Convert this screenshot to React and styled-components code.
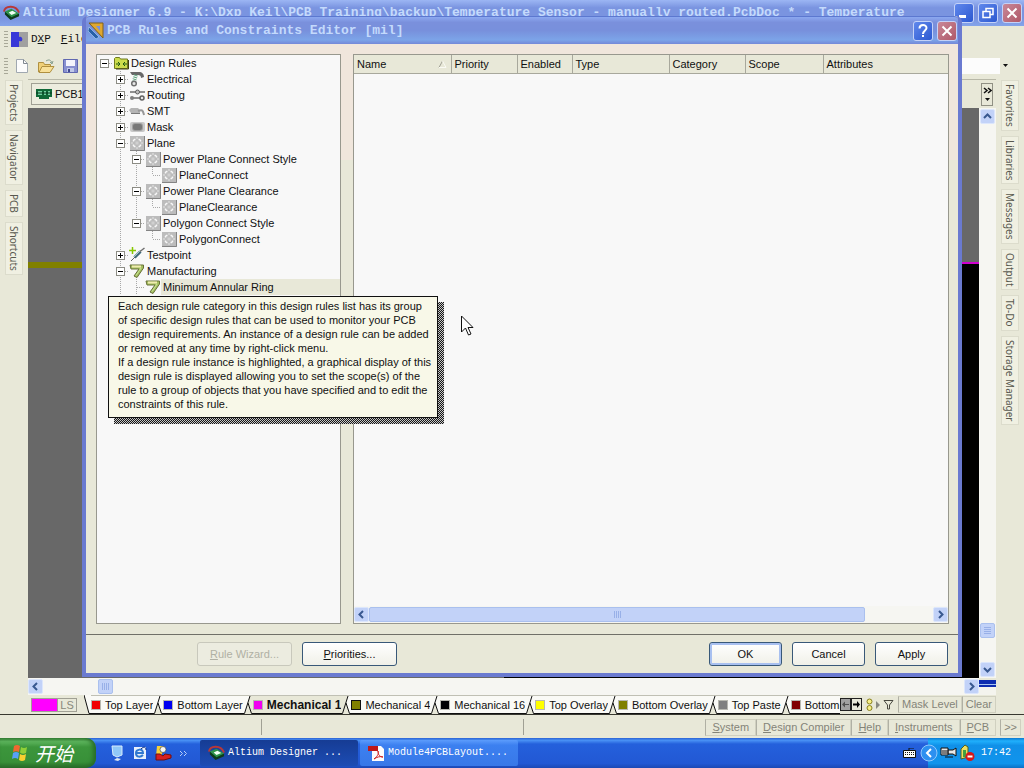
import React from "react";
import styled, { createGlobalStyle, css } from "styled-components";

const GlobalStyle = createGlobalStyle`
  * {
    box-sizing: border-box;
  }
  body {
    margin: 0;
    background-color: #e8e8d8;
    color: #101010;
    font: 11px/16px "Liberation Sans", Arial, sans-serif;
    overflow: hidden;
  }
  button, input, select {
    font: inherit;
    color: inherit;
    margin: 0;
    padding: 0;
    border: 0;
    background: none;
  }
  ul {
    list-style: none;
    margin: 0;
    padding: 0;
  }
  svg {
    display: block;
    flex: none;
  }
`;

const mono = css`
  font-family: "Liberation Mono", "Courier New", monospace;
`;

const Desktop = styled.div`
  position: relative;
  display: flex;
  flex-direction: column;
  height: 100vh;
  overflow: hidden;
`;

/* main window */

const TitleBar = styled.header`
  display: flex;
  align-items: center;
  height: 26px;
  padding: 0 2px 0 3px;
  flex: none;
  background: linear-gradient(#9cb6f4, #7a94e0 30%, #7a94e0 70%, #84a4ea);
`;

const TitleText = styled.h1`
  ${mono}
  flex: 1;
  min-width: 0;
  margin: 0 0 0 3px;
  overflow: hidden;
  white-space: pre;
  color: #c4dafc;
  font-size: 13px;
  line-height: 20px;
  font-weight: bold;
`;

const WindowButton = styled.button`
  display: flex;
  align-items: center;
  justify-content: center;
  flex: none;
  width: 20px;
  height: 20px;
  margin-left: 4px;
  border: 1px solid #c4d2f8;
  border-radius: 3px;
  background: ${({ $close }) =>
    $close
      ? "linear-gradient(135deg, #c88898, #b05868)"
      : "linear-gradient(135deg, #6088ec, #2c58d0)"};
`;

const MenuBar = styled.nav`
  display: flex;
  align-items: center;
  flex: none;
  height: 26px;
  padding-left: 4px;
`;

const MenuItem = styled.button`
  ${mono}
  font-size: 11px;
  line-height: 16px;
  margin-right: ${({ $icon }) => ($icon ? "3px" : "10px")};
`;

const Grip = styled.span`
  width: 4px;
  height: 16px;
  margin-right: 3px;
  background: repeating-linear-gradient(#a8a898 0 1px, transparent 1px 3px);
`;

const ToolBar = styled.div`
  display: flex;
  align-items: center;
  flex: none;
  height: 27px;
  padding: 0 16px 0 4px;
`;

const ToolButton = styled.button`
  display: flex;
  justify-content: center;
  width: 22px;
  height: 16px;
  margin-right: 2px;
`;

const Combo = styled.div`
  display: flex;
  align-items: center;
  width: 200px;
  margin-left: auto;

  select {
    flex: 1;
    height: 16px;
    background-color: #fcfcfc;
    appearance: none;
  }
`;

const Workspace = styled.main`
  display: flex;
  flex: 1;
  min-height: 0;
`;

const SideStrip = styled.nav`
  display: flex;
  flex-direction: column;
  align-items: center;
  gap: 5px;
  flex: none;
  width: 28px;
  padding-top: 1px;
`;

const SideTab = styled.button`
  padding: 3px 0;
  width: 18px;
  border: 1px solid #dcdccc;
  background-color: #f0f0e2;
  color: #58584e;
  font-family: "Noto Sans", sans-serif;
  font-size: 10px;
  line-height: 16px;
  writing-mode: vertical-rl;
`;

const Editor = styled.section`
  display: flex;
  flex-direction: column;
  flex: 1;
  min-width: 0;
`;

const DocBar = styled.div`
  display: flex;
  align-items: center;
  flex: none;
  height: 29px;
  padding: 0 3px;
  border-top: 1px solid #b8b8a8;
`;

const DocTab = styled.button`
  display: flex;
  align-items: center;
  gap: 3px;
  width: 120px;
  height: 22px;
  padding-left: 4px;
  border: 1px solid #a0a094;
  background-color: #ececde;
`;

const DocMore = styled.button`
  display: flex;
  justify-content: center;
  align-items: center;
  width: 12px;
  height: 23px;
  margin-left: auto;
  border: 1px solid #909084;
`;

const CanvasRow = styled.div`
  display: flex;
  flex: 1;
  min-height: 0;
`;

const BoardHalf = styled.div`
  display: flex;
  flex-direction: column;
  flex: 1;
  background-color: ${({ $dark }) => ($dark ? "#000000" : "#686868")};
`;

const BoardGap = styled.div`
  height: 154px;
  background-color: #686868;
`;

const BoardLine = styled.div`
  height: ${({ $thin }) => ($thin ? "2px" : "6px")};
  background-color: ${({ $color }) => $color};
`;

const VScroll = styled.div`
  display: flex;
  flex-direction: column;
  align-items: center;
  width: 17px;
  padding: 1px 0;
  background-color: #f6f6f2;
`;

const HScroll = styled.div`
  display: flex;
  align-items: center;
  flex: none;
  height: 17px;
  background-color: #f6f6f2;
`;

const ScrollButton = styled.button`
  display: flex;
  align-items: center;
  justify-content: center;
  flex: none;
  width: 15px;
  height: 15px;
  border: 1px solid #dce6fc;
  border-radius: 2px;
  background-color: #c2d2f8;
`;

const ScrollThumb = styled.div`
  display: flex;
  align-items: center;
  justify-content: center;
  height: 15px;
  width: 15px;
  border: 1px solid #aac0ee;
  border-radius: 2px;
  background-color: #c2d2f8;
`;

const Spacer = styled.div`
  flex: ${({ $size }) => ($size ? `0 0 ${$size}px` : 1)};
`;

const Corner = styled.div`
  align-self: stretch;
  width: 17px;
  background: linear-gradient(
    #e8e8d8 0 2px,
    #0c2cb0 2px 6px,
    #a8c4f0 6px 7px,
    #0c2cb0 7px 9px,
    #f4f4ee 9px
  );
`;

/* layer tabs */

const LayerBar = styled.div`
  display: flex;
  align-items: center;
  flex: none;
  height: 20px;
  padding: 0 28px 0 31px;
  border-bottom: 1px solid #383830;
`;

const LayerSet = styled.button`
  display: flex;
  width: 46px;
  height: 14px;
  margin-right: 7px;
  border: 1px solid #a0a094;
  color: #88887c;
  line-height: 13px;

  &::before {
    content: "";
    width: 25px;
    align-self: stretch;
    background-color: #ff00ff;
  }
  span {
    flex: 1;
    border-left: 1px solid #a0a094;
  }
`;

const LayerTabs = styled.div`
  display: flex;
  align-self: stretch;
  flex: 1;
  min-width: 0;
  overflow: hidden;
`;

const LayerTab = styled.button`
  display: flex;
  align-items: center;
  gap: 4px;
  flex: none;
  height: 19px;
  border-top: 1px solid #c0c0b4;
  border-bottom: 1px solid #101010;
  background-color: ${({ $active }) => ($active ? "#e8e8d8" : "#fafaf6")};
  font-weight: ${({ $active }) => ($active ? "bold" : "normal")};
  font-size: ${({ $active }) => ($active ? "12px" : "11px")};
  white-space: nowrap;
`;

const Swatch = styled.span`
  width: 10px;
  height: 10px;
  background-color: ${({ $color }) => $color};
  border: 1px solid ${({ $edge }) => $edge || "#b8b8b0"};
`;

const TabArrow = styled.button`
  display: flex;
  align-items: center;
  justify-content: center;
  width: 11px;
  height: 13px;
  border: 1px solid #202020;
  background-color: ${({ $off }) => ($off ? "#a0a0a0" : "#e8e8d8")};
`;

const MaskTools = styled.div`
  display: flex;
  align-items: center;
  gap: 3px;
  padding: 0 4px;
`;

const FlatButton = styled.button`
  height: 17px;
  padding: 0 ${({ $tight }) => ($tight ? "3px" : "6px")};
  border: 1px solid #d0d0c0;
  border-left-color: #b0b0a4;
  color: #848478;
  line-height: 15px;
  white-space: nowrap;
`;

const StatusBar = styled.footer`
  display: flex;
  align-items: center;
  flex: none;
  height: 23px;
  padding: 1px 3px 0 0;
`;

const StatusField = styled.span`
  width: 262px;
  height: 16px;
  border-right: 1px solid #a0a094;
`;

const StatusButtons = styled.div`
  display: flex;
  margin-left: auto;

  button:last-child {
    margin-left: 4px;
  }
`;

/* taskbar */

const TaskBar = styled.footer`
  ${mono}
  display: flex;
  align-items: center;
  flex: none;
  height: 30px;
  color: #ffffff;
  font-size: 10px;
  background: linear-gradient(#2c62d4, #4890f4 8%, #2460dc 20%, #2258d4 85%, #1c48b4);
`;

const StartButton = styled.button`
  display: flex;
  align-items: center;
  gap: 5px;
  width: 96px;
  height: 30px;
  padding-left: 11px;
  border-radius: 0 10px 10px 0;
  background: linear-gradient(#3c8a3c, #5cb45c 12%, #3c963c 30%, #389038 80%, #286c28);
  box-shadow: inset -3px 0 4px #286c28;
  font-family: "Noto Sans CJK SC", sans-serif;
  font-size: 19px;
  font-style: italic;
  line-height: 28px;
`;

const QuickLaunch = styled.div`
  display: flex;
  align-items: center;
  gap: 7px;
  width: 104px;
  padding-left: 13px;
`;

const Task = styled.button`
  display: flex;
  align-items: center;
  gap: 3px;
  width: 158px;
  height: 26px;
  margin-right: 2px;
  padding-left: 8px;
  border-radius: 2px;
  white-space: pre;
  background: ${({ $pressed }) =>
    $pressed
      ? "linear-gradient(#163c94, #1c4cb4)"
      : "linear-gradient(#5c9cfc, #3c80f0 20%, #3878e8)"};
`;

const Tray = styled.div`
  display: flex;
  align-items: center;
  align-self: stretch;
  gap: 2px;
  margin-left: 11px;
  width: 96px;
  background: linear-gradient(#0c78d0, #20b0fc 10%, #1090e8 25%, #1094ec 85%, #0c70c4);

  > svg:first-child {
    margin-left: -8px;
  }
  time {
    margin-left: 4px;
  }
`;

/* rules dialog */

const Dialog = styled.section`
  position: absolute;
  top: 16px;
  left: 82px;
  right: 62px;
  bottom: 91px;
  display: flex;
  flex-direction: column;
  border: 4px solid #6a7ad0;
  border-top-width: 0;
  border-radius: 6px 6px 0 0;
  background: linear-gradient(#f0e6dc 0 144px, #e8e8d8 144px);
`;

const DialogTitle = styled.header`
  display: flex;
  align-items: center;
  flex: none;
  height: 28px;
  padding: 0 1px 0 2px;
  border-top: 1px solid #5c78d0;
  border-radius: 4px 4px 0 0;
  background: linear-gradient(#8ca8f0, #7a90dc 20%, #7890dc 50%, #7ca4e8 85%, #7488d8);
`;

const DialogBody = styled.div`
  display: flex;
  flex: 1;
  min-height: 0;
  gap: 12px;
  padding: 10px 9px 10px 10px;
  border-bottom: 1px solid #707068;
`;

const TreePanel = styled.ul`
  width: 245px;
  flex: none;
  border: 1px solid #98988e;
  background-color: #f8f8f8;
  overflow: hidden;
`;

const TreeRow = styled.li`
  display: flex;
  height: 16px;
`;

const dottedV = "repeating-linear-gradient(#a8a8a8 0 1px, transparent 1px 2px)";
const dottedH =
  "repeating-linear-gradient(90deg, #a8a8a8 0 1px, transparent 1px 2px)";

const TreeCell = styled.span`
  display: flex;
  align-items: center;
  justify-content: center;
  flex: none;
  width: 16px;
  height: 16px;
  background:
    ${({ $line }) => ($line ? dottedV : "none")} 7px 0 / 1px
      ${({ $line }) => ($line === "half" ? "8px" : "16px")} no-repeat,
    ${({ $branch }) => ($branch ? dottedH : "none")} 8px 8px / 8px 1px no-repeat;
`;

const Expander = styled.button`
  display: flex;
  align-items: center;
  justify-content: center;
  width: 9px;
  height: 9px;
  margin-right: 1px;
  border: 1px solid #8c8c84;
  background-color: #ffffff;
`;

const TreeLabel = styled.span`
  flex: 1;
  padding-left: 2px;
  white-space: nowrap;
  background-color: ${({ $selected }) => ($selected ? "#e8e8d8" : "transparent")};
`;

const RulesPanel = styled.div`
  display: flex;
  flex-direction: column;
  flex: 1;
  min-width: 0;
  border: 1px solid #98988e;
  background-color: #f8f8f8;
`;

const RulesTable = styled.table`
  width: 100%;
  table-layout: fixed;
  border-collapse: collapse;

  th {
    height: 18px;
    padding: 0 4px 0 3px;
    border-right: 1px solid #a8a89c;
    border-bottom: 1px solid #a8a89c;
    background-color: #e8e8d8;
    font-weight: normal;
    line-height: 16px;
    text-align: left;
  }
  th:last-child {
    border-right: 0;
  }
  th > div {
    display: flex;
    align-items: center;
    justify-content: space-between;
  }
`;

const ScrollTrack = styled.div`
  display: grid;
  grid-template-columns: 88% 1fr;
  flex: 1;

  > div {
    width: auto;
  }
`;

const DialogFooter = styled.footer`
  display: flex;
  align-items: center;
  gap: 10px;
  flex: none;
  height: 38px;
  padding: 0 10px 0 111px;
`;

const PushButton = styled.button`
  width: ${({ $wide }) => ($wide ? "95px" : "73px")};
  height: 24px;
  border: 1px solid ${({ disabled }) => (disabled ? "#c8c8bc" : "#385878")};
  border-radius: 3px;
  background: ${({ disabled }) =>
    disabled ? "#ecece0" : "linear-gradient(#ffffff, #f0f0e8)"};
  color: ${({ disabled }) => (disabled ? "#b0b0a4" : "#101010")};
  box-shadow: ${({ $primary }) =>
    $primary ? "inset 0 0 0 2px #a8c0f0" : "none"};
`;

const HelpTip = styled.div`
  position: absolute;
  top: 280px;
  left: 22px;
  width: 330px;
  padding: 2px 0 6px 9px;
  border: 1px solid #101010;
  background-color: #f8f8e8;
  line-height: 14px;
  white-space: pre;

  &::before,
  &::after {
    content: "";
    position: absolute;
    background: repeating-conic-gradient(#181818 0 25%, #c8c8c8 0 50%) 0 0 / 2px
      2px;
  }
  &::before {
    top: 5px;
    right: -7px;
    bottom: -7px;
    width: 6px;
  }
  &::after {
    left: 5px;
    right: -1px;
    bottom: -7px;
    height: 6px;
  }
`;

const Pointer = styled.svg`
  position: absolute;
  top: 299px;
  left: 375px;
`;

/* icons */

const Chip = ({ size = 18 }) => (
  <svg width={size} height={size} viewBox="0 0 18 18">
    <path d="M1 7C2 1 13-1 17 8" fill="none" stroke="#b83838" strokeWidth="2" />
    <path d="M2 10l6 6 9-4V9l-8 3-7-5z" fill="#0c3c1c" />
    <path d="M2 7l7-3 8 5-8 4z" fill="#2c9448" />
    <path d="M6 8l4-2 4 2.500-5 2z" fill="#f0fff4" />
  </svg>
);

const Arrow = ({ turn = 0, color = "#385890" }) => (
  <svg width="9" height="9" viewBox="0 0 9 9">
    <path
      d="M3 1l3.5 3.5L3 8"
      fill="none"
      stroke={color}
      strokeWidth="2"
      transform={`rotate(${turn} 4.5 4.5)`}
    />
  </svg>
);

const ThumbLines = ({ turn = 0 }) => (
  <svg width="9" height="9" viewBox="0 0 9 9">
    <path
      d="M1.5 1v7M3.5 1v7M5.5 1v7M7.5 1v7"
      stroke="#98b0e8"
      transform={`rotate(${turn} 4.5 4.5)`}
    />
  </svg>
);

const Cross = () => (
  <svg width="12" height="12" viewBox="0 0 12 12">
    <path d="M1.5 1.5l9 9M10.5 1.5l-9 9" stroke="#fff" strokeWidth="2" />
  </svg>
);

const Caret = () => (
  <svg width="5" height="3" viewBox="0 0 5 3">
    <path d="M0 0h5L2.5 3z" fill="#101010" />
  </svg>
);

const PlaneIcon = () => (
  <svg width="15" height="15" viewBox="0 0 15 15">
    <path d="M0 0h15v15H0z" fill="#bcbcbc" />
    <path d="M0 14.5h14.5V0" fill="none" stroke="#848484" />
    <path
      d="M5.500 3.500H4.500L3.500 4.500v1M8.500 3.500h1l1 1v1M10.500 8.500v1l-1 1h-1M5.500 10.500h-1l-1-1v-1"
      fill="none"
      stroke="#f8f8f8"
      strokeWidth="1.500"
    />
    <path d="M1 7h2M11 7h2M7 1v2M7 11v2" stroke="#e4e4e4" />
    <path d="M5.500 5.500h3v3h-3z" fill="#d0d0d0" />
  </svg>
);

const ManufacturingIcon = () => (
  <svg width="16" height="16" viewBox="0 0 16 16">
    <path d="M1 2h13.500v3L8 14.500 5 13l5-7H2z" fill="#a4c060" stroke="#687038" strokeLinejoin="round" />
    <path d="M3 3.500h9" stroke="#f0ecb0" strokeWidth="2" />
    <path d="M12 5L7 12.500" stroke="#c8e498" />
  </svg>
);

const treeIcons = {
  root: (
    <svg width="16" height="16" viewBox="0 0 16 16">
      <path d="M1.500 13.500v-10l1-1h4l1 1.500h7v9.500z" fill="#ccdc4c" stroke="#707820" />
      <path d="M15.500 5v9H3" fill="none" stroke="#404010" />
      <path d="M3 9h4M5 7l2 2-2 2M14 9h-4M12 7l-2 2 2 2" fill="none" stroke="#205810" />
    </svg>
  ),
  electrical: (
    <svg width="16" height="16" viewBox="0 0 16 16">
      <path d="M1 1h9c3 0 5 2 5 5l-3 1c0-2-1-3-3-3H3z" fill="#686868" />
      <path d="M7 4L5 10" stroke="#58a078" strokeWidth="4" strokeDasharray="1 1" />
      <circle cx="5" cy="12.500" r="2.300" fill="#e8e8e8" stroke="#707070" strokeWidth="1.500" />
    </svg>
  ),
  routing: (
    <svg width="16" height="16" viewBox="0 0 16 16">
      <path d="M1 5h6M10 5h6M2 11h9" fill="none" stroke="#909090" strokeWidth="2" />
      <circle cx="8.500" cy="5" r="2" fill="#c0c0c0" stroke="#606060" />
      <circle cx="3" cy="11" r="2" fill="#808080" />
      <circle cx="13" cy="11" r="2" fill="#e8e8e8" stroke="#606060" strokeWidth="1.500" />
    </svg>
  ),
  smt: (
    <svg width="16" height="16" viewBox="0 0 16 16">
      <path d="M0 7l2-2h7l2 2v3H2z" fill="#b4b4b4" />
      <path d="M2 10.500h9" stroke="#787878" />
      <path d="M9 8c5-2 5 0 6 4" fill="none" stroke="#989898" strokeWidth="2" />
    </svg>
  ),
  mask: (
    <svg width="16" height="16" viewBox="0 0 16 16">
      <rect x="1" y="3" width="15" height="10" rx="2" fill="#c8c8c8" />
      <rect x="3" y="4" width="11" height="8" rx="3" fill="#a0a0a0" />
      <rect x="4" y="5" width="9" height="6" rx="2" fill="#787878" />
    </svg>
  ),
  plane: <PlaneIcon />,
  testpoint: (
    <svg width="16" height="16" viewBox="0 0 16 16">
      <path d="M3.500 0v7M0 3.500h7" stroke="#88c800" strokeWidth="1.500" />
      <path d="M2 14l4-4" stroke="#606060" />
      <path d="M5.500 10.500l6-6" stroke="#406878" strokeWidth="3" />
      <path d="M5 10l7-7" stroke="#a0c8c8" />
      <path d="M11 4.500L15.500 1" stroke="#707070" strokeWidth="1.500" />
    </svg>
  ),
  manufacturing: <ManufacturingIcon />,
};

/* data */

const tree = [
  { label: "Design Rules", icon: "root", level: 0, box: "-" },
  { label: "Electrical", icon: "electrical", level: 1, box: "+" },
  { label: "Routing", icon: "routing", level: 1, box: "+" },
  { label: "SMT", icon: "smt", level: 1, box: "+" },
  { label: "Mask", icon: "mask", level: 1, box: "+" },
  { label: "Plane", icon: "plane", level: 1, box: "-" },
  { label: "Power Plane Connect Style", icon: "plane", level: 2, box: "-" },
  { label: "PlaneConnect", icon: "plane", level: 3, last: true },
  { label: "Power Plane Clearance", icon: "plane", level: 2, box: "-" },
  { label: "PlaneClearance", icon: "plane", level: 3, last: true },
  { label: "Polygon Connect Style", icon: "plane", level: 2, box: "-", last: true },
  { label: "PolygonConnect", icon: "plane", level: 3, last: true, parentLast: true },
  { label: "Testpoint", icon: "testpoint", level: 1, box: "+" },
  { label: "Manufacturing", icon: "manufacturing", level: 1, box: "-" },
  { label: "Minimum Annular Ring", icon: "manufacturing", level: 2, selected: true },
];

const columns = [
  { label: "Name", width: 97 },
  { label: "Priority", width: 66 },
  { label: "Enabled", width: 55 },
  { label: "Type", width: 97 },
  { label: "Category", width: 76 },
  { label: "Scope", width: 78 },
  { label: "Attributes" },
];

const layers = [
  { label: "Top Layer", color: "#f00000" },
  { label: "Bottom Layer", color: "#0000f0" },
  { label: "Mechanical 1", color: "#f000f0", active: true },
  { label: "Mechanical 4", color: "#808000", edge: "#101010" },
  { label: "Mechanical 16", color: "#000000" },
  { label: "Top Overlay", color: "#ffff00" },
  { label: "Bottom Overlay", color: "#808000" },
  { label: "Top Paste", color: "#808080" },
  { label: "Bottom", color: "#800000" },
];

const leftTabs = ["Projects", "Navigator", "PCB", "Shortcuts"];
const rightTabs = [
  "Favorites",
  "Libraries",
  "Messages",
  "Output",
  "To-Do",
  "Storage Manager",
];
const panels = ["System", "Design Compiler", "Help", "Instruments", "PCB"];

const tip = `Each design rule category in this design rules list has its group
of specific design rules that can be used to monitor your PCB
design requirements. An instance of a design rule can be added
or removed at any time by right-click menu.
If a design rule instance is highlighted, a graphical display of this
design rule is displayed allowing you to set the scope(s) of the
rule to a group of objects that you have specified and to edit the
constraints of this rule.`;

const TabEdge = ({ left, right }) => (
  <svg width="10" height="19" viewBox="0 0 10 19">
    <path d="M0 0h10v19H0z" fill="#e8e8d8" />
    <path d="M6 0h4v19H8.500L5 8z" fill={right} />
    <path d="M0 0h7L1.500 18.500H0z" fill={left} />
    <path d="M0 .5h10" stroke="#c0c0b4" />
    <path d="M0 18.500h1.500L7 1M5 8l3.500 10.500H10" fill="none" stroke="#101010" />
  </svg>
);

const tabFill = (layer) => (layer.active ? "#e8e8d8" : "#fafaf6");

const TreeItem = ({ node }) => {
  const guides = [];
  for (let i = 0; i < node.level; i += 1) {
    guides.push(
      <TreeCell key={i} $line={i > 0 && !(node.parentLast && i === 2)} />
    );
  }
  return (
    <TreeRow>
      {guides}
      <TreeCell
        $branch
        $line={node.level === 0 ? null : node.last ? "half" : "full"}
      >
        {node.box && (
          <Expander aria-label={`Toggle ${node.label}`}>
            <svg width="7" height="7" viewBox="0 0 7 7">
              <path
                d={node.box === "+" ? "M1 3.5h5M3.500 1v5" : "M1 3.5h5"}
                stroke="#000"
              />
            </svg>
          </Expander>
        )}
      </TreeCell>
      <TreeCell>{treeIcons[node.icon]}</TreeCell>
      <TreeLabel $selected={node.selected}>{node.label}</TreeLabel>
    </TreeRow>
  );
};

const RulesDialog = () => (
  <Dialog role="dialog" aria-label="PCB Rules and Constraints Editor">
    <DialogTitle>
      <svg width="16" height="18" viewBox="0 0 16 18">
        <path d="M1 1h14v15z" fill="#e0a830" stroke="#806018" />
        <path d="M8 4h4v5z" fill="#7890dc" />
        <path d="M1 5l10 10-3 2L0 9z" fill="#2860a8" stroke="#b0d8f8" strokeWidth=".6" />
      </svg>
      <TitleText as="h2">PCB Rules and Constraints Editor [mil]</TitleText>
      <WindowButton aria-label="Help">
        <svg width="12" height="14" viewBox="0 0 12 14">
          <path d="M2.500 4.500C2.500 0 9.500 0 9.500 4c0 2.500-3.500 2.500-3.500 6" fill="none" stroke="#fff" strokeWidth="2" />
          <path d="M5 11h2v2H5z" fill="#fff" />
        </svg>
      </WindowButton>
      <WindowButton $close aria-label="Close">
        <Cross />
      </WindowButton>
    </DialogTitle>
    <DialogBody>
      <TreePanel>
        {tree.map((node) => (
          <TreeItem key={node.label} node={node} />
        ))}
      </TreePanel>
      <RulesPanel>
        <RulesTable>
          <colgroup>
            {columns.map((column) => (
              <col key={column.label} width={column.width} />
            ))}
          </colgroup>
          <thead>
            <tr>
              {columns.map((column, index) => (
                <th key={column.label}>
                  <div>
                    {column.label}
                    {index === 0 && (
                      <svg width="9" height="8" viewBox="0 0 9 8">
                        <path d="M1 7.500L4.500 1" stroke="#a0a094" />
                        <path d="M4.500 1L8 7.500H1" fill="none" stroke="#fafaf4" />
                      </svg>
                    )}
                  </div>
                </th>
              ))}
            </tr>
          </thead>
        </RulesTable>
        <Spacer />
        <HScroll>
          <ScrollButton aria-label="Scroll left">
            <Arrow turn={180} />
          </ScrollButton>
          <ScrollTrack>
            <ScrollThumb>
              <ThumbLines />
            </ScrollThumb>
          </ScrollTrack>
          <ScrollButton aria-label="Scroll right">
            <Arrow />
          </ScrollButton>
        </HScroll>
      </RulesPanel>
    </DialogBody>
    <DialogFooter>
      <PushButton $wide disabled>
        <u>R</u>ule Wizard...
      </PushButton>
      <PushButton $wide>
        <u>P</u>riorities...
      </PushButton>
      <Spacer />
      <PushButton $primary>OK</PushButton>
      <PushButton>Cancel</PushButton>
      <PushButton>Apply</PushButton>
    </DialogFooter>
    <HelpTip role="tooltip">{tip}</HelpTip>
    <Pointer width="13" height="21" viewBox="0 0 13 21">
      <path d="M.5 1v16l4-4 3 7 2.500-1-3-6.500h5z" fill="#fff" stroke="#101010" />
    </Pointer>
  </Dialog>
);

const App = () => (
  <>
    <GlobalStyle />
    <Desktop>
      <TitleBar>
        <Chip size={17} />
        <TitleText>
          {
            "Altium Designer 6.9 - K:\\Dxp_Keil\\PCB Training\\backup\\Temperature Sensor - manually routed.PcbDoc * - Temperature"
          }
        </TitleText>
        <WindowButton aria-label="Minimize">
          <svg width="12" height="12" viewBox="0 0 12 12">
            <path d="M1 9.500h7" stroke="#fff" strokeWidth="3" />
          </svg>
        </WindowButton>
        <WindowButton aria-label="Restore">
          <svg width="12" height="12" viewBox="0 0 12 12">
            <path d="M4 4V1.500h7v6H8.500M1 4.500h7v6H1z" fill="none" stroke="#fff" strokeWidth="1.500" />
          </svg>
        </WindowButton>
        <WindowButton $close aria-label="Close">
          <Cross />
        </WindowButton>
      </TitleBar>
      <MenuBar>
        <Grip />
        <MenuItem $icon aria-label="System menu">
          <svg width="17" height="15" viewBox="0 0 17 15">
            <path d="M8 0h9v15H8z" fill="#a0a0a0" />
            <path d="M0 0h8v5c4-2 5 6 0 4v6H0z" fill="#3838d8" />
          </svg>
        </MenuItem>
        <MenuItem>
          D<u>X</u>P
        </MenuItem>
        <MenuItem>
          <u>F</u>ile
        </MenuItem>
      </MenuBar>
      <ToolBar>
        <Grip />
        <ToolButton aria-label="New">
          <svg width="12" height="16" viewBox="0 0 12 16">
            <path d="M.5 1.500h7l4 4v9H.5z" fill="#fcfcfc" stroke="#a0a8b0" />
            <path d="M7.500 1.500v4h4" fill="none" stroke="#808890" />
          </svg>
        </ToolButton>
        <ToolButton aria-label="Open">
          <svg width="17" height="16" viewBox="0 0 17 16">
            <path d="M.5 14V4.500h5l1 2h6V9" fill="#f0d078" stroke="#b09040" />
            <path d="M1 14.500l3-6h12l-4 6z" fill="#f8e098" stroke="#b09040" />
            <path d="M8 3c3-2 5-1 6 2M12 4l2 2 1-3" fill="none" stroke="#88a090" />
          </svg>
        </ToolButton>
        <ToolButton aria-label="Save">
          <svg width="15" height="16" viewBox="0 0 15 16">
            <path d="M.5 1.500h14v13H.5z" fill="#8890d0" stroke="#6068b0" />
            <path d="M3 2h9v6H3z" fill="#f4f4fc" />
            <path d="M4 10h7v4H4z" fill="#c0c8e8" />
            <path d="M5 11h2v3H5z" fill="#404890" />
          </svg>
        </ToolButton>
        <Combo>
          <select aria-label="Filter" />
          <Spacer $size={3} />
          <Caret />
        </Combo>
      </ToolBar>
      <Workspace>
        <SideStrip>
          {leftTabs.map((tab) => (
            <SideTab key={tab}>{tab}</SideTab>
          ))}
        </SideStrip>
        <Editor>
          <DocBar>
            <DocTab>
              <svg width="16" height="12" viewBox="0 0 16 12">
                <path d="M0 1h16v8h-3v2H3V9H0z" fill="#106838" />
                <path d="M2 3h4v4H2zM8 3h2v4H8zM12 3h2v4h-2z" fill="#70d0a0" />
                <path d="M0 5h16" stroke="#083820" />
              </svg>
              PCB1
            </DocTab>
            <DocMore aria-label="More documents">
              <svg width="9" height="15" viewBox="0 0 9 15">
                <path d="M1 1l3 2.500L1 6M5 1l3 2.500L5 6" fill="none" stroke="#101010" strokeWidth="1.500" />
                <path d="M2 11h5l-2.500 3z" fill="#101010" />
              </svg>
            </DocMore>
          </DocBar>
          <CanvasRow>
            <BoardHalf>
              <BoardGap />
              <BoardLine $color="#808000" />
            </BoardHalf>
            <BoardHalf $dark>
              <BoardGap />
              <BoardLine $thin $color="#d000d0" />
            </BoardHalf>
            <VScroll>
              <ScrollButton aria-label="Scroll up">
                <Arrow turn={-90} />
              </ScrollButton>
              <Spacer />
              <ScrollThumb>
                <ThumbLines turn={90} />
              </ScrollThumb>
              <Spacer $size={24} />
              <ScrollButton aria-label="Scroll down">
                <Arrow turn={90} />
              </ScrollButton>
            </VScroll>
          </CanvasRow>
          <HScroll>
            <ScrollButton aria-label="Scroll left">
              <Arrow turn={180} />
            </ScrollButton>
            <Spacer $size={55} />
            <ScrollThumb>
              <ThumbLines />
            </ScrollThumb>
            <Spacer />
            <ScrollButton aria-label="Scroll right">
              <Arrow />
            </ScrollButton>
            <Corner />
          </HScroll>
        </Editor>
        <SideStrip>
          {rightTabs.map((tab) => (
            <SideTab key={tab}>{tab}</SideTab>
          ))}
        </SideStrip>
      </Workspace>
      <LayerBar>
        <LayerSet>
          <span>LS</span>
        </LayerSet>
        <svg width="7" height="19" viewBox="0 0 7 19">
          <path d="M0 0h7v19H5z" fill="#fafaf6" />
          <path d="M0 0l5 18.500h2" fill="none" stroke="#101010" />
        </svg>
        <LayerTabs>
          {layers.map((layer, index) => (
            <React.Fragment key={layer.label}>
              {index > 0 && (
                <TabEdge left={tabFill(layers[index - 1])} right={tabFill(layer)} />
              )}
              <LayerTab $active={layer.active}>
                <Swatch $color={layer.color} $edge={layer.edge} />
                {layer.label}
              </LayerTab>
            </React.Fragment>
          ))}
        </LayerTabs>
        <TabArrow $off aria-label="Previous layers">
          <svg width="7" height="7" viewBox="0 0 7 7">
            <path d="M0 3.500L3 .5V3h4v1H3v2.500z" fill="#505050" />
          </svg>
        </TabArrow>
        <TabArrow aria-label="Next layers">
          <svg width="7" height="7" viewBox="0 0 7 7">
            <path d="M7 3.500L4 0v2.500H0v2h4V7z" fill="#000" />
          </svg>
        </TabArrow>
        <MaskTools>
          <svg width="7" height="14" viewBox="0 0 7 14">
            <circle cx="3.500" cy="3.500" r="2.500" fill="#f8f088" stroke="#888020" />
            <circle cx="3.500" cy="10" r="2.500" fill="#f8f088" stroke="#888020" />
          </svg>
          <svg width="4" height="8" viewBox="0 0 4 8">
            <path d="M0 0l4 4-4 4z" fill="#888880" />
          </svg>
          <svg width="11" height="11" viewBox="0 0 11 11">
            <path d="M1 1.500h9L6.500 6v4h-2V6z" fill="#e8e8d8" stroke="#484840" />
          </svg>
        </MaskTools>
        <FlatButton $tight>Mask Level</FlatButton>
        <FlatButton $tight>Clear</FlatButton>
      </LayerBar>
      <StatusBar>
        <StatusField />
        <StatusField />
        <StatusButtons>
          {panels.map((panel) => (
            <FlatButton key={panel}>
              <u>{panel[0]}</u>
              {panel.slice(1)}
            </FlatButton>
          ))}
          <FlatButton $tight>&gt;&gt;</FlatButton>
        </StatusButtons>
      </StatusBar>
      <TaskBar>
        <StartButton>
          <svg width="19" height="18" viewBox="0 0 19 18">
            <path d="M3 2c2-1.500 4-1.500 6 0L8 8C6 7 4 7 2 8z" fill="#f06830" />
            <path d="M10 3c2 1.200 4 1.200 6 0l-1 6c-2 1-4 1-6-.5z" fill="#90d038" />
            <path d="M2 9c2-1.200 4-1.200 6 0l-1 6c-2-1.300-4-1.300-6 0z" fill="#58a0f8" />
            <path d="M9 10c2 1.200 4 1.200 6 0l-1 6c-2 1.200-4 1.200-6 0z" fill="#f8d030" />
          </svg>
          开始
        </StartButton>
        <QuickLaunch>
          <svg width="16" height="17" viewBox="0 0 16 17">
            <path d="M3 1h10v9l-5 2-4-2z" fill="#90c8f8" stroke="#d8ecfc" />
            <path d="M5 15l3-2 4 1-3 2z" fill="#e0e8f0" />
          </svg>
          <svg width="16" height="16" viewBox="0 0 16 16">
            <path d="M2 2h12v12H2z" fill="#e8f0fc" />
            <path d="M4 8h7c0-5-7-4-7 0 0 5 5 4 7 2" fill="none" stroke="#3078d0" strokeWidth="2" />
            <path d="M9 4c3-3 5-2 5 1" fill="none" stroke="#103080" />
          </svg>
          <svg width="17" height="16" viewBox="0 0 17 16">
            <path d="M2 1h6l1 3-3 7H1z" fill="#f8d038" />
            <circle cx="8" cy="4.500" r="3" fill="#f8f8f8" stroke="#484848" strokeWidth=".7" />
            <path d="M1 9h4l3 2 2-2 6 1v3l-7 2H1z" fill="#d82020" stroke="#701010" />
          </svg>
          <svg width="9" height="7" viewBox="0 0 9 7">
            <path d="M1 1l2.500 2.500L1 6M5 1l2.500 2.500L5 6" fill="none" stroke="#b8d0f8" />
          </svg>
        </QuickLaunch>
        <Task $pressed>
          <Chip size={17} />
          Altium Designer ...
        </Task>
        <Task>
          <svg width="17" height="16" viewBox="0 0 17 16">
            <path d="M4 1h9l3 3v12H4z" fill="#fcfcfc" />
            <path d="M0 1h10v5H0z" fill="#c01818" />
            <path d="M6 14c4-3 5-6 4-8 0 4 2 6 5 6-3-1-6 0-9 2z" fill="none" stroke="#d02020" />
          </svg>
          Module4PCBLayout....
        </Task>
        <Spacer />
        <svg width="14" height="10" viewBox="0 0 14 10">
          <path d="M.5 2.500h12v7H.5z" fill="#fcfcfc" stroke="#101010" />
          <path d="M2 4.500h10M2 6.500h10" stroke="#101010" strokeDasharray="1 1" />
          <path d="M6 2V0h5" fill="none" stroke="#101010" />
        </svg>
        <Tray>
          <svg width="18" height="18" viewBox="0 0 18 18">
            <circle cx="9" cy="9" r="8" fill="#2c90f0" stroke="#90c8fc" />
            <path d="M11 5L7 9l4 4" fill="none" stroke="#fff" strokeWidth="2" />
          </svg>
          <svg width="17" height="14" viewBox="0 0 17 14">
            <path d="M1 2h7v7H1zM8 4h5l3-2v8l-3-2H8z" fill="#e8e8e8" stroke="#101010" />
            <path d="M2 5h5M2 7h5M5 11h8" stroke="#101010" />
          </svg>
          <svg width="16" height="18" viewBox="0 0 16 18">
            <path d="M2 5l4-4 3 2v10l-7 2z" fill="#f0e060" stroke="#506020" />
            <path d="M4 6h3v7H4z" fill="#40a040" />
            <circle cx="11" cy="12.500" r="4.500" fill="#d81818" />
            <path d="M8.500 12.500h5" stroke="#fff" strokeWidth="2" />
          </svg>
          <time>17:42</time>
        </Tray>
      </TaskBar>
      <RulesDialog />
    </Desktop>
  </>
);

export default App;
